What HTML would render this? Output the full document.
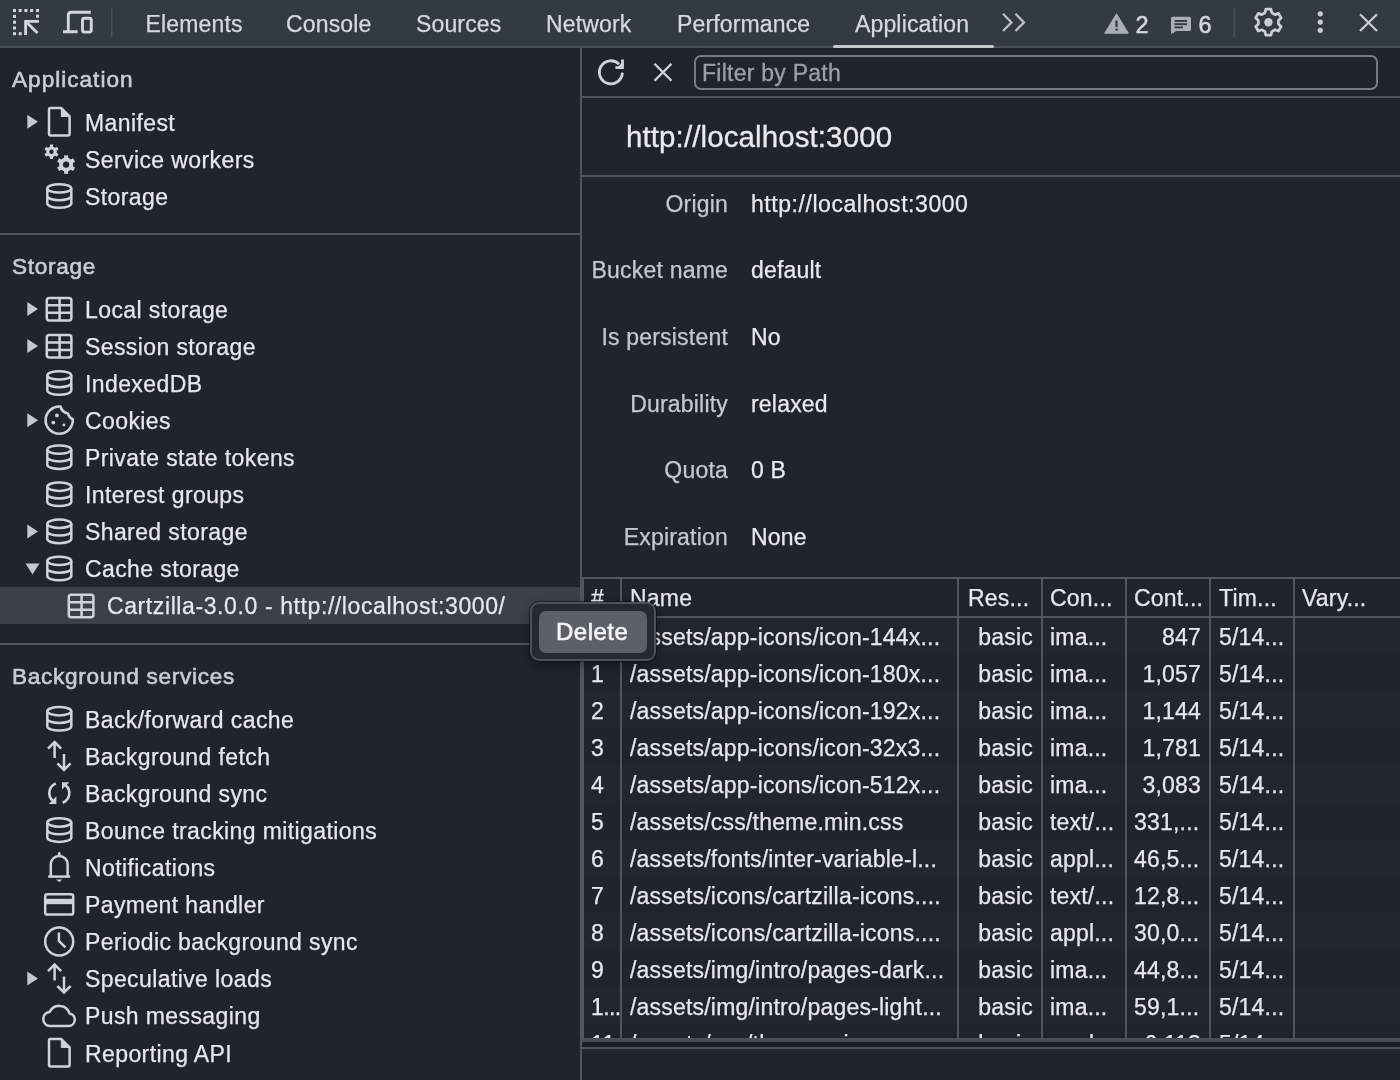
<!DOCTYPE html>
<html><head><meta charset="utf-8">
<style>
*{margin:0;padding:0;box-sizing:border-box}
body{will-change:transform}
.t,.c,.kv,.tab{-webkit-text-stroke:0.25px currentColor}
html,body{width:1400px;height:1080px;overflow:hidden;background:#1f242d;font-family:"Liberation Sans",sans-serif;color:#e6e8ed}
.a{position:absolute;white-space:nowrap}
#tb{position:absolute;left:0;top:0;width:1400px;height:48px;background:#343a44;border-bottom:2px solid #4a4f58}
.tab{position:absolute;top:0.5px;height:46px;line-height:46px;font-size:23px;color:#d6d9df;letter-spacing:0.15px}
.t{position:absolute;font-size:23px;line-height:37px;height:37px;white-space:nowrap;letter-spacing:0.4px;color:#e6e8ed}
.h{position:absolute;font-size:22.6px;line-height:37px;height:37px;white-space:nowrap;color:#c9ccd3;letter-spacing:0.7px;-webkit-text-stroke:0.6px currentColor}
.hl{position:absolute;left:0;width:580px;height:2px;background:#50555e}
svg{position:absolute;overflow:visible}
.ic{fill:none;stroke:#c9ccd3;stroke-width:2}
.arr{fill:#c9ccd3}
.kv{position:absolute;font-size:23px;line-height:37px;height:37px;white-space:nowrap;letter-spacing:0.2px}
.k{right:672px;color:#c5c8cf;text-align:right}
.v{left:751px;color:#e8eaee}
.row{position:absolute;left:0;width:818px;height:37px}
.c{position:absolute;top:0;height:37px;line-height:37px;font-size:23px;white-space:nowrap;overflow:hidden;letter-spacing:0.2px;color:#e6e8ed}
.row .c{top:2px}
.vl{position:absolute;top:578px;width:2px;height:460px;background:#50555e}
</style></head><body>

<!-- top toolbar -->
<div id="tb"></div>
<svg style="left:0;top:0" width="1400" height="48">
  <!-- inspect -->
  <g fill="#d3d6dc">
   <rect x="13" y="9" width="3" height="3"/><rect x="18.6" y="9" width="3" height="3"/><rect x="24.4" y="9" width="3" height="3"/><rect x="30.1" y="9" width="3" height="3"/><rect x="36" y="9" width="3" height="3"/>
   <rect x="13" y="14.9" width="3" height="3"/><rect x="13" y="20.7" width="3" height="3"/><rect x="13" y="26.5" width="3" height="3"/><rect x="13" y="32.2" width="3" height="3"/>
   <rect x="36" y="14.7" width="3" height="3"/><rect x="18.7" y="32.2" width="3" height="3"/>
  </g>
  <path d="M25.6 34.9V21.3H38.9M26.4 22.1L37.4 33.1" fill="none" stroke="#d3d6dc" stroke-width="2.8"/>
  <!-- device -->
  <g fill="none" stroke="#d3d6dc" stroke-width="2.9">
    <path d="M63 31.7H77.6M68.3 31.7V15.4Q68.3 12.3 71.2 12.3H90.8"/>
    <rect x="82.5" y="18.3" width="8.8" height="13.8" rx="2"/>
  </g>
  <rect x="111" y="8" width="1.5" height="29" fill="#4c5159"/>
  <rect x="1233.5" y="8" width="1.5" height="29" fill="#4c5159"/>
</svg>
<div class="tab" style="left:145.5px">Elements</div>
<div class="tab" style="left:286px">Console</div>
<div class="tab" style="left:416px">Sources</div>
<div class="tab" style="left:546px">Network</div>
<div class="tab" style="left:677px">Performance</div>
<div class="tab" style="left:855px">Application</div>
<div class="a" style="left:833px;top:45px;width:161px;height:3px;background:#c4c8cf;border-radius:2px"></div>


<!-- sidebar -->
<div class="a" style="left:0;top:587px;width:580px;height:37px;background:#3b4049"></div>
<div class="hl" style="top:233px"></div>
<div class="hl" style="top:643px"></div>
<div class="a" style="left:580px;top:48px;width:2px;height:1032px;background:#50555e"></div>
<div class="h" style="left:12px;top:60.9px;letter-spacing:1px">Application</div>
<div class="h" style="left:12px;top:248.3px">Storage</div>
<div class="h" style="left:12px;top:658px">Background services</div>
<div class="t" style="left:85px;top:104.5px">Manifest</div>
<div class="t" style="left:85px;top:141.7px">Service workers</div>
<div class="t" style="left:85px;top:178.8px">Storage</div>
<div class="t" style="left:85px;top:291.6px">Local storage</div>
<div class="t" style="left:85px;top:328.7px">Session storage</div>
<div class="t" style="left:85px;top:365.8px">IndexedDB</div>
<div class="t" style="left:85px;top:402.9px">Cookies</div>
<div class="t" style="left:85px;top:440.0px">Private state tokens</div>
<div class="t" style="left:85px;top:477.1px">Interest groups</div>
<div class="t" style="left:85px;top:514.2px">Shared storage</div>
<div class="t" style="left:85px;top:551.3px">Cache storage</div>
<div class="t" style="left:85px;top:701.6px">Back/forward cache</div>
<div class="t" style="left:85px;top:738.7px">Background fetch</div>
<div class="t" style="left:85px;top:775.8px">Background sync</div>
<div class="t" style="left:85px;top:812.9px">Bounce tracking mitigations</div>
<div class="t" style="left:85px;top:850.0px">Notifications</div>
<div class="t" style="left:85px;top:887.1px">Payment handler</div>
<div class="t" style="left:85px;top:924.2px">Periodic background sync</div>
<div class="t" style="left:85px;top:961.3px">Speculative loads</div>
<div class="t" style="left:85px;top:998.4px">Push messaging</div>
<div class="t" style="left:85px;top:1035.5px">Reporting API</div>
<div class="t" style="left:107px;top:588.2px;letter-spacing:0.6px">Cartzilla-3.0.0 - http://localhost:3000/</div>
<svg style="left:0;top:0" width="580" height="1080">
<defs>
<g id="i-arr"><path d="M27.3 -7L38 0L27.3 7Z" fill="#c4c8cf" stroke="none"/></g>
<g id="i-darr"><path d="M25.5 -5.2H39.5L32.5 5.8Z" fill="#c4c8cf" stroke="none"/></g>
<g id="i-doc" fill="none" stroke="#d0d3da" stroke-width="2.5"><path d="M50.3 -13.7H61.3L69.6 -5.4V12Q69.6 13.6 68 13.6H50.6Q49 13.6 49 12V-12.1Q49 -13.7 50.3 -13.7Z" stroke-linejoin="round"/><path d="M61.3 -13.7V-5.4H69.6Z" fill="#d0d3da" stroke-width="1"/></g>
<g id="i-db" fill="none" stroke="#d0d3da" stroke-width="2.5"><ellipse cx="59.3" cy="-7.7" rx="12" ry="4.2"/><path d="M47.3 -7.7V7.5A12 4.2 0 0 0 71.3 7.5V-7.7M47.3 -0.1A12 4.2 0 0 0 71.3 -0.1"/></g>
<g id="i-table" fill="none" stroke="#d0d3da" stroke-width="2.5"><rect x="46.8" y="-11" width="24.6" height="22.5" rx="2.5"/><path d="M59.6 -11V11.5M46.8 -3.6H71.4M46.8 3.9H71.4"/></g>
<g id="i-cookie" fill="none" stroke="#d0d3da" stroke-width="2.6"><path d="M60.5 -13.6C61.5 -9.5 64.5 -7.5 67.8 -6.8C68.8 -3.8 70.5 -1.8 72.8 -1A13.6 13.6 0 1 1 60.5 -13.6Z" stroke-linejoin="round"/><circle cx="56.9" cy="-4.8" r="1.9" fill="#d0d3da" stroke="none"/><circle cx="53.3" cy="2.4" r="1.9" fill="#d0d3da" stroke="none"/><circle cx="63.9" cy="4.8" r="1.4" fill="#d0d3da" stroke="none"/></g>
<g id="i-gears" fill="#d0d3da"><g transform="translate(51.5 -7.3)"><circle r="5.3"/><rect x="-1.6" y="-7.2" width="3.2" height="14.4"/><rect x="-1.6" y="-7.2" width="3.2" height="14.4" transform="rotate(60)"/><rect x="-1.6" y="-7.2" width="3.2" height="14.4" transform="rotate(120)"/><circle r="2.2" fill="#1f242d"/></g><g transform="translate(66.1 5.6)"><circle r="7"/><rect x="-2" y="-9.2" width="4" height="18.4"/><rect x="-2" y="-9.2" width="4" height="18.4" transform="rotate(60)"/><rect x="-2" y="-9.2" width="4" height="18.4" transform="rotate(120)"/><circle r="3.2" fill="#1f242d"/></g></g>
<g id="i-updown" fill="none" stroke="#d0d3da" stroke-width="2.5"><path d="M54.6 -13.5V1.9M48 -7.4L54.6 -14L61.2 -7.4M64 -2V13.5M57.4 7.4L64 14L70.6 7.4"/></g>
<g id="i-sync" fill="none" stroke="#d0d3da" stroke-width="2.6"><path d="M55.9 -9.6A10.2 10.2 0 0 0 53 7.8"/><path d="M62.7 9.6A10.2 10.2 0 0 0 65.6 -7.8"/><path d="M56.4 3.2V10.8H48.8Z" fill="#d0d3da" stroke="none"/><path d="M62 -10.9H69.3L62 -3.6Z" fill="#d0d3da" stroke="none"/></g>
<g id="i-bell" fill="none" stroke="#d0d3da" stroke-width="2.5"><path d="M50.8 9V-3A8.4 8.4 0 0 1 67.6 -3V9"/><path d="M48.2 9.3H70.2"/><path d="M59.2 -11.6V-14" stroke-linecap="round" stroke-width="2.6"/><path d="M56 12.2H62.5L59.2 14.8Z" fill="#d0d3da" stroke="none"/></g>
<g id="i-card" fill="none" stroke="#d0d3da" stroke-width="2.5"><rect x="45.2" y="-10.2" width="28" height="20.4" rx="2.2"/><rect x="45.2" y="-5.6" width="28" height="5.4" fill="#d0d3da" stroke="none"/></g>
<g id="i-clock" fill="none" stroke="#d0d3da" stroke-width="2.5"><circle cx="59.2" cy="0" r="14"/><path d="M58.9 -9V-0.6L65.4 5.8"/></g>
<g id="i-cloud" fill="none" stroke="#d0d3da" stroke-width="2.5"><path d="M49.5 10.3H68.5A6.3 6.3 0 0 0 69.6 -2.2A10.8 10.8 0 0 0 49.6 -3.8A7.1 7.1 0 0 0 49.5 10.3Z"/></g>
</defs>
<use href="#i-doc" transform="translate(0 121.8)"/>
<use href="#i-arr" transform="translate(0 121.8)"/>
<use href="#i-gears" transform="translate(0 159.0)"/>
<use href="#i-db" transform="translate(0 196.1)"/>
<use href="#i-table" transform="translate(0 308.9)"/>
<use href="#i-arr" transform="translate(0 308.9)"/>
<use href="#i-table" transform="translate(0 346.0)"/>
<use href="#i-arr" transform="translate(0 346.0)"/>
<use href="#i-db" transform="translate(0 383.1)"/>
<use href="#i-cookie" transform="translate(0 420.2)"/>
<use href="#i-arr" transform="translate(0 420.2)"/>
<use href="#i-db" transform="translate(0 457.3)"/>
<use href="#i-db" transform="translate(0 494.4)"/>
<use href="#i-db" transform="translate(0 531.5)"/>
<use href="#i-arr" transform="translate(0 531.5)"/>
<use href="#i-db" transform="translate(0 568.6)"/>
<use href="#i-darr" transform="translate(0 568.6)"/>
<use href="#i-db" transform="translate(0 718.9)"/>
<use href="#i-updown" transform="translate(0 756.0)"/>
<use href="#i-sync" transform="translate(0 793.1)"/>
<use href="#i-db" transform="translate(0 830.2)"/>
<use href="#i-bell" transform="translate(0 867.3)"/>
<use href="#i-card" transform="translate(0 904.4)"/>
<use href="#i-clock" transform="translate(0 941.5)"/>
<use href="#i-updown" transform="translate(0 978.6)"/>
<use href="#i-arr" transform="translate(0 978.6)"/>
<use href="#i-cloud" transform="translate(0 1015.7)"/>
<use href="#i-doc" transform="translate(0 1052.8)"/>
<use href="#i-table" transform="translate(22 605.8)"/>
</svg>


<!-- right panel -->
<div class="a" style="left:582px;top:96px;width:818px;height:2px;background:#50555e"></div>
<svg style="left:0;top:0" width="1400" height="100">
 <g fill="none" stroke="#d0d3da" stroke-width="2.3">
  <path d="M622.4 72.6A11.5 11.5 0 1 1 619.2 64.3" stroke-width="2.8"/>
  <path d="M615.4 67.7H622.5V59.6" stroke-width="2.8" stroke-linejoin="miter"/><path d="M617 67.7H622.5V62.2Z" fill="#d0d3da" stroke="none"/>
  <path d="M654.5 63.8L671.5 80.8M671.5 63.8L654.5 80.8"/>
 </g>
</svg>
<div class="a" style="left:694px;top:55px;width:684px;height:35px;border:2px solid #777c84;border-radius:7px"></div>
<div class="a" style="left:702px;top:56.3px;height:35px;line-height:35px;font-size:23px;color:#9ca0a8;letter-spacing:0.25px;-webkit-text-stroke:0.3px #9ca0a8">Filter by Path</div>
<div class="a" style="left:626px;top:114px;height:46px;line-height:46px;font-size:29.5px;color:#e8eaee;letter-spacing:0.1px;-webkit-text-stroke:0.3px #e8eaee">http://localhost:3000</div>
<div class="a" style="left:582px;top:175px;width:818px;height:2px;background:#50555e"></div>
<div class="kv k" style="top:185.5px">Origin</div><div class="kv v" style="top:185.5px;letter-spacing:0.55px">http://localhost:3000</div>
<div class="kv k" style="top:252.2px">Bucket name</div><div class="kv v" style="top:252.2px">default</div>
<div class="kv k" style="top:318.9px">Is persistent</div><div class="kv v" style="top:318.9px">No</div>
<div class="kv k" style="top:385.6px">Durability</div><div class="kv v" style="top:385.6px">relaxed</div>
<div class="kv k" style="top:452.3px">Quota</div><div class="kv v" style="top:452.3px">0 B</div>
<div class="kv k" style="top:519.0px">Expiration</div><div class="kv v" style="top:519.0px">None</div>


<!-- table -->
<div class="a" id="tbl" style="left:582px;top:577px;width:818px;height:461px;overflow:hidden">
 <div class="a" style="left:0;top:0;width:818px;height:2px;background:#50555e"></div>
 <div class="hdr">
  <div class="c" style="left:9px;top:3px">#</div>
  <div class="c" style="left:48px;top:3px">Name</div>
  <div class="c" style="left:386px;top:3px">Res...</div>
  <div class="c" style="left:468px;top:3px">Con...</div>
  <div class="c" style="left:552px;top:3px">Cont...</div>
  <div class="c" style="left:637px;top:3px">Tim...</div>
  <div class="c" style="left:720px;top:3px">Vary...</div>
 </div>
 <div class="row" style="top:40px;background:#22272f">
<div class="c" style="left:9px;width:29px">0</div>
<div class="c" style="left:48px;width:325px">/assets/app-icons/icon-144x...</div>
<div class="c" style="right:367px">basic</div>
<div class="c" style="left:468px;width:75px">ima...</div>
<div class="c" style="right:199px;text-align:right">847</div>
<div class="c" style="left:637px">5/14...</div>
</div>
<div class="row" style="top:77px">
<div class="c" style="left:9px;width:29px">1</div>
<div class="c" style="left:48px;width:325px">/assets/app-icons/icon-180x...</div>
<div class="c" style="right:367px">basic</div>
<div class="c" style="left:468px;width:75px">ima...</div>
<div class="c" style="right:199px;text-align:right">1,057</div>
<div class="c" style="left:637px">5/14...</div>
</div>
<div class="row" style="top:114px;background:#22272f">
<div class="c" style="left:9px;width:29px">2</div>
<div class="c" style="left:48px;width:325px">/assets/app-icons/icon-192x...</div>
<div class="c" style="right:367px">basic</div>
<div class="c" style="left:468px;width:75px">ima...</div>
<div class="c" style="right:199px;text-align:right">1,144</div>
<div class="c" style="left:637px">5/14...</div>
</div>
<div class="row" style="top:151px">
<div class="c" style="left:9px;width:29px">3</div>
<div class="c" style="left:48px;width:325px">/assets/app-icons/icon-32x3...</div>
<div class="c" style="right:367px">basic</div>
<div class="c" style="left:468px;width:75px">ima...</div>
<div class="c" style="right:199px;text-align:right">1,781</div>
<div class="c" style="left:637px">5/14...</div>
</div>
<div class="row" style="top:188px;background:#22272f">
<div class="c" style="left:9px;width:29px">4</div>
<div class="c" style="left:48px;width:325px">/assets/app-icons/icon-512x...</div>
<div class="c" style="right:367px">basic</div>
<div class="c" style="left:468px;width:75px">ima...</div>
<div class="c" style="right:199px;text-align:right">3,083</div>
<div class="c" style="left:637px">5/14...</div>
</div>
<div class="row" style="top:225px">
<div class="c" style="left:9px;width:29px">5</div>
<div class="c" style="left:48px;width:325px">/assets/css/theme.min.css</div>
<div class="c" style="right:367px">basic</div>
<div class="c" style="left:468px;width:75px">text/...</div>
<div class="c" style="left:552px;width:75px">331,...</div>
<div class="c" style="left:637px">5/14...</div>
</div>
<div class="row" style="top:262px;background:#22272f">
<div class="c" style="left:9px;width:29px">6</div>
<div class="c" style="left:48px;width:325px">/assets/fonts/inter-variable-l...</div>
<div class="c" style="right:367px">basic</div>
<div class="c" style="left:468px;width:75px">appl...</div>
<div class="c" style="left:552px;width:75px">46,5...</div>
<div class="c" style="left:637px">5/14...</div>
</div>
<div class="row" style="top:299px">
<div class="c" style="left:9px;width:29px">7</div>
<div class="c" style="left:48px;width:325px">/assets/icons/cartzilla-icons....</div>
<div class="c" style="right:367px">basic</div>
<div class="c" style="left:468px;width:75px">text/...</div>
<div class="c" style="left:552px;width:75px">12,8...</div>
<div class="c" style="left:637px">5/14...</div>
</div>
<div class="row" style="top:336px;background:#22272f">
<div class="c" style="left:9px;width:29px">8</div>
<div class="c" style="left:48px;width:325px">/assets/icons/cartzilla-icons....</div>
<div class="c" style="right:367px">basic</div>
<div class="c" style="left:468px;width:75px">appl...</div>
<div class="c" style="left:552px;width:75px">30,0...</div>
<div class="c" style="left:637px">5/14...</div>
</div>
<div class="row" style="top:373px">
<div class="c" style="left:9px;width:29px">9</div>
<div class="c" style="left:48px;width:325px">/assets/img/intro/pages-dark...</div>
<div class="c" style="right:367px">basic</div>
<div class="c" style="left:468px;width:75px">ima...</div>
<div class="c" style="left:552px;width:75px">44,8...</div>
<div class="c" style="left:637px">5/14...</div>
</div>
<div class="row" style="top:410px;background:#22272f">
<div class="c" style="left:9px;width:29px;letter-spacing:-0.6px">1...</div>
<div class="c" style="left:48px;width:325px">/assets/img/intro/pages-light...</div>
<div class="c" style="right:367px">basic</div>
<div class="c" style="left:468px;width:75px">ima...</div>
<div class="c" style="left:552px;width:75px">59,1...</div>
<div class="c" style="left:637px">5/14...</div>
</div>
<div class="row" style="top:447px">
<div class="c" style="left:9px;width:29px">11</div>
<div class="c" style="left:48px;width:325px">/assets/css/theme.min.css</div>
<div class="c" style="right:367px">basic</div>
<div class="c" style="left:468px;width:75px">appl...</div>
<div class="c" style="right:199px;text-align:right">6,113</div>
<div class="c" style="left:637px">5/14...</div>
</div>
 <div class="a" style="left:0;top:39px;width:818px;height:2px;background:#50555e"></div>
 <div class="a" style="left:0;top:0;width:1.5px;height:461px;background:#50555e"></div>
 <div class="a" style="left:38px;top:0;width:2px;height:461px;background:#50555e"></div>
 <div class="a" style="left:375px;top:0;width:2px;height:461px;background:#50555e"></div>
 <div class="a" style="left:459px;top:0;width:2px;height:461px;background:#50555e"></div>
 <div class="a" style="left:543px;top:0;width:2px;height:461px;background:#50555e"></div>
 <div class="a" style="left:627px;top:0;width:2px;height:461px;background:#50555e"></div>
 <div class="a" style="left:711px;top:0;width:2px;height:461px;background:#50555e"></div>
</div>
<div class="a" style="left:582px;top:1038px;width:818px;height:4px;background:#4a4f57"></div>
<div class="a" style="left:582px;top:1042px;width:818px;height:5px;background:#1b1f25"></div>
<div class="a" style="left:582px;top:1047px;width:818px;height:2px;background:#50555e"></div>


<!-- toolbar right -->
<svg style="left:0;top:0" width="1400" height="48">
 <path d="M1003 13.8L1011.5 22.4L1003 31M1015.5 13.8L1024 22.4L1015.5 31" fill="none" stroke="#b9bdc5" stroke-width="2.3"/>
 <path d="M1116.5 13.8L1128.3 33.2H1104.7Z" fill="#a9adb5" stroke="#a9adb5" stroke-width="1" stroke-linejoin="round"/>
 <rect x="1115.4" y="20.5" width="2.2" height="6.5" fill="#343a44"/><rect x="1115.4" y="28.5" width="2.2" height="2.2" fill="#343a44"/>
 <path d="M1172.5 16.8H1189.5Q1191 16.8 1191 18.3V29.5Q1191 31 1189.5 31H1176.2L1171 34.3V18.3Q1171 16.8 1172.5 16.8Z" fill="#a9adb5"/>
 <rect x="1174.5" y="20" width="12.5" height="1.9" fill="#343a44"/><rect x="1174.5" y="23.2" width="12.5" height="1.9" fill="#343a44"/><rect x="1174.5" y="26.4" width="8.5" height="1.9" fill="#343a44"/>
 <g transform="translate(1268.4 22.2)" fill="none" stroke="#cdd0d7" stroke-width="2.7" stroke-linejoin="round">
  <path d="M-2.6 -13H2.6L3.4 -9.4L6.6 -7.6L10.1 -8.8L12.7 -4.3L10 -1.8V1.8L12.7 4.3L10.1 8.8L6.6 7.6L3.4 9.4L2.6 13H-2.6L-3.4 9.4L-6.6 7.6L-10.1 8.8L-12.7 4.3L-10 1.8V-1.8L-12.7 -4.3L-10.1 -8.8L-6.6 -7.6L-3.4 -9.4Z"/>
  <circle r="4.2" fill="#c9ccd3" stroke="none"/>
 </g>
 <circle cx="1320.3" cy="13.8" r="2.6" fill="#c9ccd3"/><circle cx="1320.3" cy="22.1" r="2.6" fill="#c9ccd3"/><circle cx="1320.3" cy="30.3" r="2.6" fill="#c9ccd3"/>
 <path d="M1360 14.2L1377 31M1377 14.2L1360 31" fill="none" stroke="#c9ccd3" stroke-width="2.3"/>
</svg>
<div class="tab" style="left:1135.5px;top:1.5px;font-size:23.5px;-webkit-text-stroke:0.5px currentColor">2</div>
<div class="tab" style="left:1198.5px;top:1.5px;font-size:23.5px;-webkit-text-stroke:0.5px currentColor">6</div>

<!-- context menu -->
<div class="a" style="left:530px;top:602px;width:125.5px;height:59px;background:#252930;border:2px solid #4b5059;border-radius:9px;box-shadow:0 0 0 1px rgba(0,0,0,0.4),0 4px 12px rgba(0,0,0,0.35)"></div>
<div class="a" style="left:539px;top:611px;width:107.5px;height:41.5px;background:#5b6069;border-radius:7px"></div>
<div class="a" style="left:556px;top:611px;height:41.5px;line-height:41.5px;font-size:24px;color:#f4f5f7;letter-spacing:0.5px;-webkit-text-stroke:0.6px #f4f5f7">Delete</div>

</body></html>
